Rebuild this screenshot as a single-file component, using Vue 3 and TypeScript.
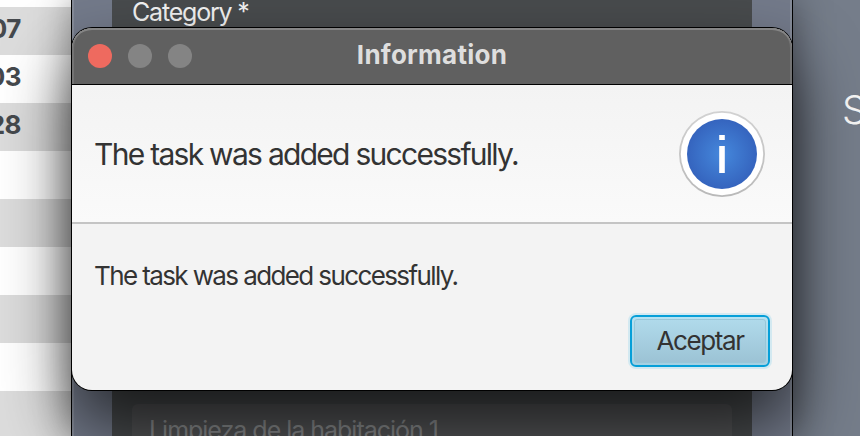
<script setup lang="ts">
import { ref } from 'vue'

const rows: string[] = ['', '07', '03', '28', '', '', '', '', '', '']
const message = 'The task was added successfully.'
const open = ref(true)
</script>

<template>
  <main class="desktop">
    <div class="table">
      <div v-for="(row, i) in rows" :key="i" class="row"><span>{{ row }}</span></div>
    </div>
    <div class="window">
      <div class="form">
        <label class="category">Category *</label>
        <div class="field">Limpieza de la habitación 1</div>
      </div>
    </div>
    <div class="side">S</div>

    <section v-if="open" class="dialog" role="dialog" aria-labelledby="title">
      <header class="titlebar">
        <div class="lights"><i class="close"></i><i></i><i></i></div>
        <h1 id="title">Information</h1>
      </header>
      <div class="header">
        <p>{{ message }}</p>
        <svg class="info" viewBox="0 0 88 88">
          <defs>
            <radialGradient id="blue">
              <stop offset="0" stop-color="#4588dc" />
              <stop offset="1" stop-color="#3564be" />
            </radialGradient>
            <linearGradient id="rim" x1="0" y1="0" x2="0" y2="1">
              <stop offset="0" stop-color="#d2d2d2" />
              <stop offset="1" stop-color="#b9b9b9" />
            </linearGradient>
          </defs>
          <circle cx="44" cy="44" r="43" fill="url(#rim)" />
          <circle cx="44" cy="44" r="41.2" fill="#fff" />
          <circle cx="44" cy="44" r="35" fill="url(#blue)" />
          <path d="M41.2 25h5.6v5h-5.6zM41.2 36h5.6v27h-5.6z" fill="#fff" />
        </svg>
      </div>
      <div class="content">
        <p>{{ message }}</p>
        <div class="actions"><button @click="open = false"><span>Aceptar</span></button></div>
      </div>
    </section>
  </main>
</template>

<style>
body { margin: 0; overflow: hidden; }
</style>

<style scoped>
* { box-sizing: border-box; }
.desktop {
  position: relative;
  display: grid;
  grid-template-columns: 71px 722px 67px;
  width: 860px;
  height: 436px;
  overflow: hidden;
  font-family: Inter, "Liberation Sans", sans-serif;
}
.table { display: flex; flex-direction: column; height: 436px; overflow: hidden; }
.row {
  flex: 0 0 48px;
  display: flex;
  justify-content: flex-end;
  padding-right: 50px;
  background: #fff;
  color: #45494d;
  font-size: 26px;
  font-weight: 700;
  line-height: 44px;
  letter-spacing: -0.5px;
  white-space: nowrap;
}
.row:first-child { flex-basis: 7px; }
.row:nth-child(even) { background: #dcdcdc; }
.window {
  display: flex;
  justify-content: center;
  height: 436px;
  border: solid #000;
  border-width: 0 1px;
  background: #737a8a;
  box-shadow: 0 0 36px rgba(0, 0, 0, 0.42), inset 2px 0 #858b98, inset -2px 0 #858b98;
}
.form {
  display: flex;
  flex-direction: column;
  justify-content: space-between;
  width: 640px;
  padding: 0 20px;
  background: #484b4d;
}
.category {
  height: 28px;
  color: #f2f2f2;
  font-size: 25px;
  line-height: 25px;
  letter-spacing: -1.2px;
}
.field {
  height: 32px;
  padding-left: 17px;
  border-radius: 6px 6px 0 0;
  background: #535456;
  color: #8b8d8f;
  font-size: 25px;
  line-height: 52px;
  letter-spacing: -1.02px;
  overflow: hidden;
}
.side {
  padding: 86px 0 0 49px;
  overflow: hidden;
  background: #757d8a;
  color: #f5f5f5;
  font-size: 39px;
  font-weight: 300;
  line-height: 47px;
}
.table, .side { z-index: 0; }
.window { z-index: 1; }
.dialog {
  position: absolute;
  z-index: 2;
  top: 28px;
  left: 72px;
  display: flex;
  flex-direction: column;
  width: 720px;
  height: 362px;
  overflow: hidden;
  border-radius: 20px;
  background: #f3f3f3;
  color: #333;
  box-shadow: 0 0 0 1px #000, 0 36px 68px rgba(0, 0, 0, 0.66);
}
.titlebar {
  display: grid;
  grid-template-columns: 130px 1fr 130px;
  align-items: center;
  height: 57px;
  flex: none;
  border-bottom: 1px solid #000;
  border-radius: 20px 20px 0 0;
  background: #606060;
  box-shadow: inset 0 2px #858585, inset 2px 0 #737373, inset -2px 0 #737373;
}
.lights { display: flex; gap: 16px; padding-left: 16px; }
.lights i { width: 24px; height: 24px; border-radius: 50%; background: #848484; }
.lights .close { background: #ee6a5f; }
h1 {
  margin: 0;
  padding-bottom: 2px;
  color: #dedede;
  font-size: 26px;
  font-weight: 700;
  line-height: 32px;
  letter-spacing: 0.25px;
  text-align: center;
}
.header {
  display: flex;
  align-items: center;
  justify-content: space-between;
  flex: none;
  height: 139px;
  padding: 0 26px 0 22px;
  border-bottom: 2px solid #c4c4c4;
  background: linear-gradient(#f3f3f3, #fafafa);
}
p { margin: 0; white-space: nowrap; }
.header p { font-size: 30px; line-height: 36px; letter-spacing: -1.72px; }
.info { width: 88px; height: 88px; }
.content {
  display: flex;
  flex: 1;
  flex-direction: column;
  justify-content: space-between;
  padding: 36px 22px 23px 22px;
}
.content p { font-size: 26px; line-height: 32px; letter-spacing: -1.61px; }
.actions { display: flex; justify-content: flex-end; }
button {
  display: flex;
  width: 140px;
  height: 52px;
  padding: 2px;
  border: 2px solid #069fd8;
  border-radius: 6px;
  background: linear-gradient(#b5e2f2, #a4d0e2);
  box-shadow: 0 0 0 2px #d3e9f1;
  color: #333;
  font: 26px/42px Inter, "Liberation Sans", sans-serif;
  letter-spacing: -1.4px;
}
button span {
  flex: 1;
  height: 44px;
  border: 1px solid #98c6d8;
  border-radius: 3px;
  background: linear-gradient(#b0daeb, #9cc3d5);
}
</style>
